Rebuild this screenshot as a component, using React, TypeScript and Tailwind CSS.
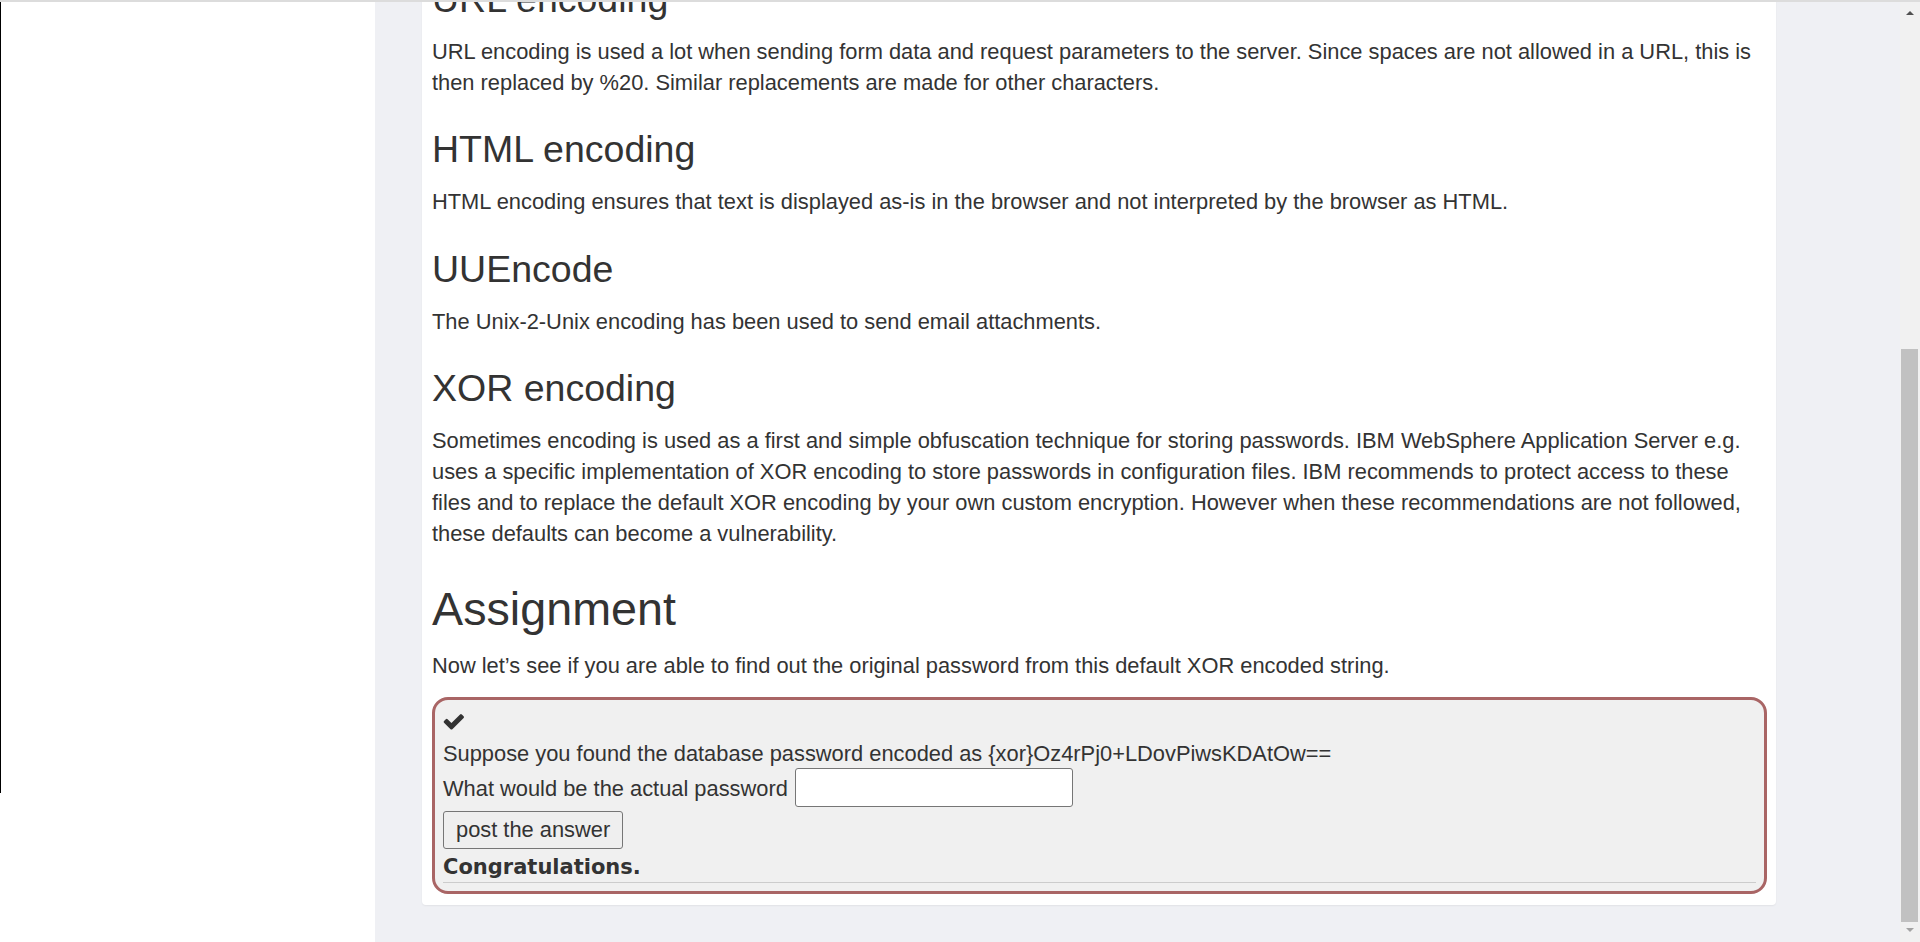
import React from "react";

const P = ({ children }: { children: React.ReactNode }) => (
  <p className="text-[21.85px] leading-[31px] text-[#333]">{children}</p>
);

const H3 = ({ children, first }: { children: React.ReactNode; first?: boolean }) => (
  <h3
    className={`text-[37.5px] leading-[39.6px] font-normal text-[#333] mb-[16.7px] ${first ? "" : "mt-[32.2px]"}`}
  >
    {children}
  </h3>
);

function Check() {
  return (
    <svg width="21" height="16" viewBox="71 362 1600 1160" className="mt-[6px]">
      <path
        fill="#333"
        d="M1671 566q0 40-28 68l-724 724-136 136q-28 28-68 28t-68-28l-136-136-362-362q-28-28-28-68t28-68l136-136q28-28 68-28t68 28l294 295 656-657q28-28 68-28t68 28l136 136q28 28 28 68z"
      />
    </svg>
  );
}

export default function App() {
  return (
    <div className="w-[1920px] h-[942px] overflow-hidden flex flex-col font-['Liberation_Sans',Arial,sans-serif] text-[#333]">
      <div className="h-[2px] w-full bg-[#dcdcdc] shrink-0" />
      <div className="flex flex-1 min-h-0">
        {/* left panel */}
        <div className="w-[375px] shrink-0 bg-white">
          <div className="w-[1px] h-[791px] bg-black" />
        </div>
        {/* main */}
        <div className="flex-1 bg-[#eff0f4] overflow-hidden">
          <div className="ml-[47px] w-[1354px] -mt-[22.3px] bg-white rounded-[4px] shadow-[0_1px_2px_rgba(0,0,0,0.06)] pl-[10px] pr-[9px] pb-[11px]">
            <H3 first>URL encoding</H3>
            <P>
              URL encoding is used a lot when sending form data and request parameters to the server. Since spaces
              are not allowed in a URL, this is then replaced by %20. Similar replacements are made for other
              characters.
            </P>
            <H3>HTML encoding</H3>
            <P>
              HTML encoding ensures that text is displayed as-is in the browser and not interpreted by the browser
              as HTML.
            </P>
            <H3>UUEncode</H3>
            <P>The Unix-2-Unix encoding has been used to send email attachments.</P>
            <H3>XOR encoding</H3>
            <P>
              Sometimes encoding is used as a first and simple obfuscation technique for storing passwords. IBM
              WebSphere Application Server e.g. uses a specific implementation of XOR encoding to store passwords
              in configuration files. IBM recommends to protect access to these files and to replace the default
              XOR encoding by your own custom encryption. However when these recommendations are not followed,
              these defaults can become a vulnerability.
            </P>
            <h2 className="text-[46.7px] leading-[51px] font-normal text-[#333] mt-[34.5px] mb-[14.8px]">Assignment</h2>
            <P>Now let’s see if you are able to find out the original password from this default XOR encoded string.</P>
            <div className="mt-[16.8px] border-[3px] border-[#a96565] rounded-[16px] bg-[#f0f0f0] px-[8px] pt-[8px] pb-[8px]">
              <div className="h-[24px]">
                <Check />
              </div>
              <div className="text-[21.85px] leading-[31px]">
                Suppose you found the database password encoded as {"{xor}"}Oz4rPj0+LDovPiwsKDAtOw==
              </div>
              <div className="flex items-center h-[39px] -mt-[1px]">
                <span className="text-[21.85px] leading-[31px] mt-[2px]">What would be the actual password</span>
                <input
                  type="text"
                  className="ml-[7px] w-[278px] h-[39px] bg-white border border-[#767676] rounded-[3px] outline-none"
                />
              </div>
              <button className="mt-[4px] h-[38px] px-[12px] bg-[#efefef] border border-[#767676] rounded-[3px] text-[21.85px] leading-[24px] text-[#333] font-['Liberation_Sans',Arial,sans-serif]">
                post the answer
              </button>
              <div className="mt-[5.5px] text-[21px] leading-[24px] font-bold font-['DejaVu_Sans',sans-serif]">
                Congratulations.
              </div>
              <div className="mt-[3px] h-[1px] bg-[#cccccc]" />
            </div>
          </div>
        </div>
        {/* scrollbar */}
        <div className="w-[20px] shrink-0 bg-[#f1f1f1] flex flex-col items-center">
          <div className="mt-[9px] w-0 h-0 border-l-[4px] border-r-[4px] border-b-[4px] border-l-transparent border-r-transparent border-b-[#505050]" />
          <div className="mt-[334px] ml-[-1px] w-[17px] h-[573px] bg-[#c1c1c1]" />
          <div className="mt-[6px] w-0 h-0 border-l-[4px] border-r-[4px] border-t-[4px] border-l-transparent border-r-transparent border-t-[#a3a3a3]" />
        </div>
      </div>
    </div>
  );
}
